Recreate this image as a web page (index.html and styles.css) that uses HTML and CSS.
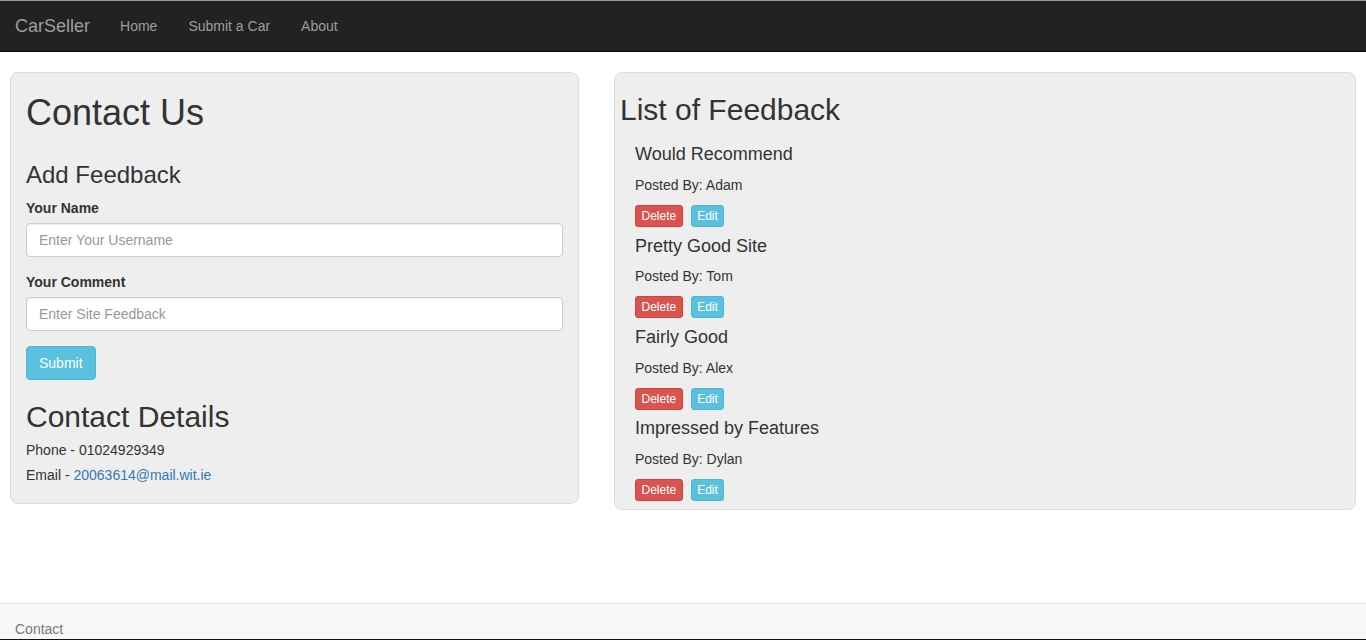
FILE: index.html
```html
<!DOCTYPE html>
<html lang="en">
<head>
<meta charset="utf-8">
<title>CarSeller - Contact</title>
<link rel="stylesheet" href="styles.css">
</head>
<body>
<div class="page">
  <nav class="navbar">
    <a class="brand" href="#">CarSeller</a>
    <ul class="nav">
      <li><a href="#">Home</a></li>
      <li><a href="#">Submit a Car</a></li>
      <li><a href="#">About</a></li>
    </ul>
  </nav>

  <main class="main">
    <section class="card contact">
      <h1>Contact Us</h1>
      <h3>Add Feedback</h3>
      <form class="form">
        <div class="form-group">
          <label for="name">Your Name</label>
          <input id="name" class="form-control" type="text" placeholder="Enter Your Username">
        </div>
        <div class="form-group">
          <label for="comment">Your Comment</label>
          <input id="comment" class="form-control" type="text" placeholder="Enter Site Feedback">
        </div>
        <div><button type="button" class="btn btn-info">Submit</button></div>
      </form>
      <h2 class="details-title">Contact Details</h2>
      <p class="detail">Phone - 01024929349</p>
      <p class="detail">Email - <a href="#">20063614@mail.wit.ie</a></p>
    </section>

    <section class="card feedback">
      <h2>List of Feedback</h2>
      <div class="item">
        <h4>Would Recommend</h4>
        <p>Posted By: Adam</p>
        <div class="actions"><button class="btn btn-xs btn-danger">Delete</button><button class="btn btn-xs btn-info">Edit</button></div>
      </div>
      <div class="item">
        <h4>Pretty Good Site</h4>
        <p>Posted By: Tom</p>
        <div class="actions"><button class="btn btn-xs btn-danger">Delete</button><button class="btn btn-xs btn-info">Edit</button></div>
      </div>
      <div class="item">
        <h4>Fairly Good</h4>
        <p>Posted By: Alex</p>
        <div class="actions"><button class="btn btn-xs btn-danger">Delete</button><button class="btn btn-xs btn-info">Edit</button></div>
      </div>
      <div class="item">
        <h4>Impressed by Features</h4>
        <p>Posted By: Dylan</p>
        <div class="actions"><button class="btn btn-xs btn-danger">Delete</button><button class="btn btn-xs btn-info">Edit</button></div>
      </div>
    </section>
  </main>

  <footer class="footer">
    <span class="footer-text">Contact</span>
  </footer>
</div>
</body>
</html>
```

FILE: styles.css
```css
* { box-sizing: border-box; }

html, body {
  margin: 0;
  padding: 0;
}

body {
  font-family: "Liberation Sans", Arial, Helvetica, sans-serif;
  font-size: 14px;
  line-height: 1.42857143;
  color: #333;
  background: #fff;
  overflow: hidden;
}

a { color: #337ab7; text-decoration: none; }

.page {
  display: flex;
  flex-direction: column;
  height: 100vh;
}

/* Navbar */
.navbar {
  display: flex;
  align-items: stretch;
  height: 52px;
  background: #222;
  border-top: 1px solid #9a9a9a;
  border-bottom: 1px solid #080808;
  flex: 0 0 auto;
}

.brand {
  padding: 15px;
  font-size: 18px;
  line-height: 20px;
  color: #9d9d9d;
}

.nav {
  display: flex;
  list-style: none;
  margin: 0;
  padding: 0;
}

.nav a {
  display: block;
  padding: 15px 15.5px;
  line-height: 20px;
  color: #9d9d9d;
}

.nav li:first-child a { padding-left: 15px; }

/* Main */
.main {
  flex: 1 1 auto;
  display: grid;
  grid-template-columns: 569px 742px;
  column-gap: 35px;
  align-items: start;
  padding: 20px 10px 0 10px;
}

.card {
  display: flex;
  flex-direction: column;
  background: #eee;
  border: 1px solid #ddd;
  border-radius: 8px;
}

.contact {
  padding: 0 15px 18px;
}

.feedback {
  padding: 0 5px 8px;
}

h1, h2, h3, h4 {
  font-weight: 500;
  line-height: 1.1;
  color: #333;
}

h1 { font-size: 36px; margin: 20px 0 10px; }
h2 { font-size: 30px; margin: 20px 0 10px; }
h3 { font-size: 24px; margin: 19px 0 10px; }
h4 { font-size: 18px; margin: 0 0 10px; }

p { margin: 0 0 10px; }

/* Form */
.form {
  display: flex;
  flex-direction: column;
}

.form-group {
  display: flex;
  flex-direction: column;
  align-items: flex-start;
  margin-bottom: 15px;
}

label {
  font-weight: bold;
  margin-bottom: 5px;
  line-height: 20px;
}

.form-control {
  width: 100%;
  height: 34px;
  padding: 6px 12px;
  font-family: inherit;
  font-size: 14px;
  line-height: 1.42857143;
  color: #555;
  background: #fff;
  border: 1px solid #ccc;
  border-radius: 4px;
  box-shadow: inset 0 1px 1px rgba(0, 0, 0, .075);
}

.form-control::placeholder { color: #999; opacity: 1; }

.btn {
  display: inline-block;
  padding: 6px 12px;
  font-family: inherit;
  font-size: 14px;
  line-height: 1.42857143;
  border: 1px solid transparent;
  border-radius: 4px;
  color: #fff;
  cursor: pointer;
}

.btn-info {
  background: #5bc0de;
  border-color: #46b8da;
}

.btn-danger {
  background: #d9534f;
  border-color: #d43f3a;
}

.btn-xs {
  padding: 1px 5.5px;
  font-size: 12px;
  line-height: 1.5;
  border-radius: 3px;
}

.details-title { margin-bottom: 7px; }

.detail { margin: 0 0 5px; }
.detail:last-child { margin-bottom: 0; }

/* Feedback list */
.item {
  padding: 9.4px 15px 0;
}

.actions {
  display: flex;
  gap: 8px;
}

/* Footer */
.footer {
  flex: 0 0 37px;
  background: #f8f8f8;
  border-top: 1px solid #e7e7e7;
  border-bottom: 1px solid #111;
  padding: 15px 15px 0;
}

.footer-text {
  display: block;
  color: #777;
  line-height: 20px;
}
```
